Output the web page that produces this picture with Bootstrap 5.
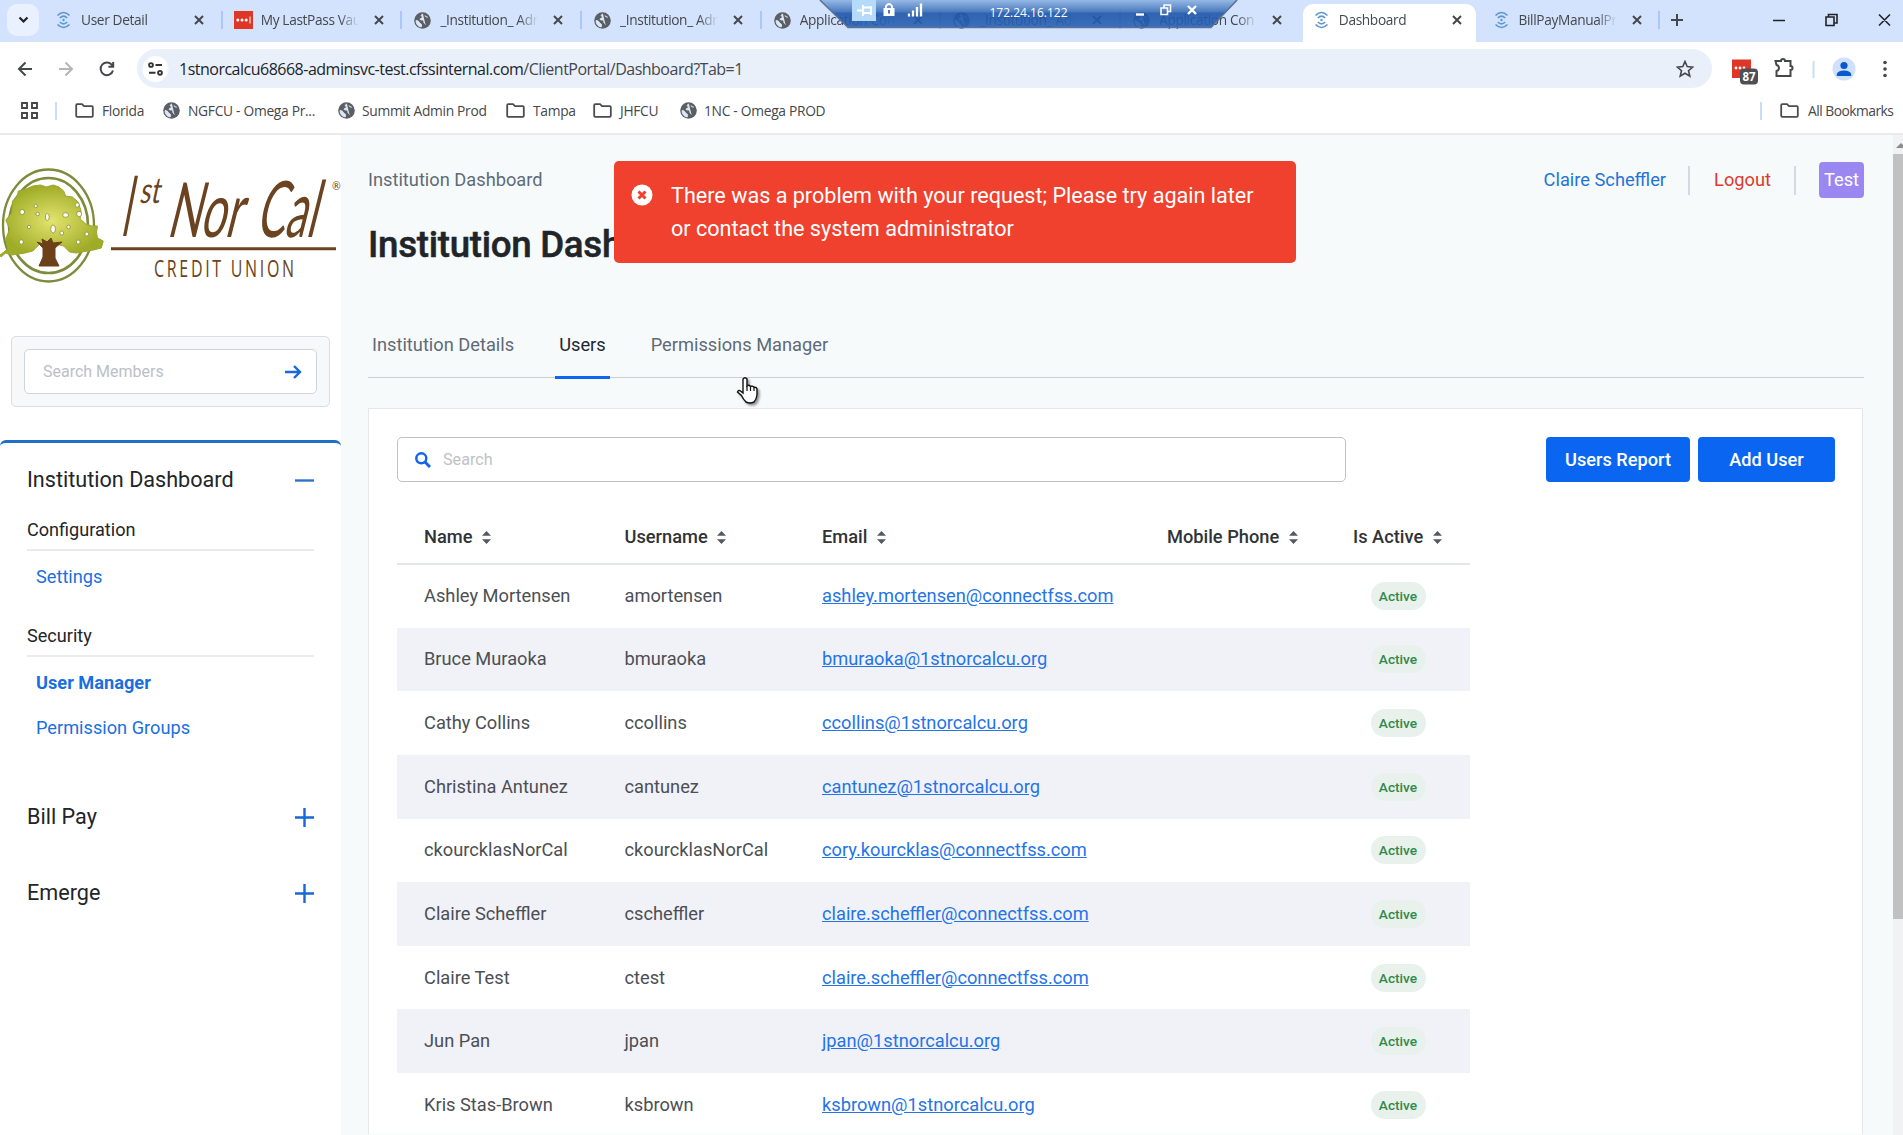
<!DOCTYPE html>
<html lang="en">
<head>
<meta charset="utf-8">
<title>Dashboard</title>
<link rel="stylesheet" href="https://cdn.jsdelivr.net/npm/bootstrap@5.3.0/dist/css/bootstrap.min.css">
<style>
html,body{height:100%;overflow:hidden}
body{font-family:Roboto,"Liberation Sans",sans-serif;font-size:18.25px;line-height:24px;color:#212529;background:#fff}
svg{display:block;flex:none}
.ff-ui{font-family:"Open Sans","Noto Sans",sans-serif;color:#45474b}
.tabstrip{height:42px;background:#d3e3fd;padding-left:42px;position:relative}
.tabpick{position:absolute;left:7px;top:4px;width:32px;height:32px;border-radius:10px;background:#e9f1fe}
.btab{width:179.7px;height:40px;flex:none;padding-left:12px;position:relative;font-size:13.7px;letter-spacing:-.35px}
.btab .lbl{width:98px;margin-left:8px;overflow:hidden;white-space:nowrap;-webkit-mask-image:linear-gradient(90deg,#000 80%,transparent 100%)}
.btab svg.x{margin-left:15px}
.btab.sep::after{content:"";position:absolute;right:-1px;top:11px;width:2px;height:18px;background:#a8c7fa}
.btab.on::before{content:"";position:absolute;z-index:0;left:3px;top:4px;width:173px;height:38px;background:#fff;border-radius:10px 10px 0 0}
.btab.on>*{z-index:1}
.rdp{position:absolute;left:819px;top:0;z-index:5}
.tbar{height:53px}
.omni{height:39px;border-radius:20px;background:#e9f0fa;width:1575px;font-size:16px;letter-spacing:-.5px;white-space:nowrap}
.bmarks{height:40px;font-size:13.8px;letter-spacing:-.3px;border-bottom:2px solid #ebebeb;white-space:nowrap}
.bmarks span{flex:none}
.vsep{width:2px;background:#c8dcfb;height:18px}
.page{height:1000px}
.side{width:341px;flex:none;background:#fff}
.sbox{margin:53px 0 0 11px;width:319px;height:71px;border:1px solid #d9dee2;border-radius:5px;background:#f6f8f9;padding:12px}
.sbox>div{height:45px;border:1px solid #cfd4da;border-radius:5px;background:#fff;padding:0 14px 0 18px;font-size:16px;color:#bcc0c5}
.menu{margin-top:33px;border-top:3px solid #1f6fc4;border-radius:6px 6px 0 0;padding:0 27px}
.m-head{font-size:21.6px;height:28px;line-height:28px}
.m-sub{font-size:18.1px;padding-bottom:7px;border-bottom:2px solid #e9ebed;height:33px}
.m-link{display:block;color:#1a6fe0;text-decoration:none;padding-left:9px;font-size:18.2px}
.main{background:#f7fafb;flex:1;padding:0 29px 0 27px;min-width:0}
.crumb{color:#5d6b78;height:36px}
.top-sep{width:2px;height:29px;background:#d5d9e1}
.envb{background:#9b87f2;color:#fff;border-radius:4px;width:45px;height:36px;line-height:35px;text-align:center}
h1.ttl{font-size:36.7px;font-weight:500;line-height:46px;letter-spacing:-.3px;margin:24px 0 0 0;white-space:nowrap;-webkit-text-stroke:.5px #212529}
.ptabs{margin-top:57px;height:53px;border-bottom:1px solid #c9cfd8;color:#5f6a76}
.ptabs div{padding:0 4px;height:54px;margin-right:37px;line-height:39px}
.ptabs .on{color:#1d2733;border-bottom:3px solid #0d66f2}
.panel{margin-top:30px;background:#fff;border:1px solid #e4e8eb;border-bottom:0;height:726px;padding:28px 27px 0 28px;width:1495px}
.find{width:949px;height:45px;border:1px solid #bfc3c8;border-radius:5px;padding-left:17px;color:#bfc2c6;font-size:16.2px}
.pbtn{height:45px;border-radius:4px;background:#0a66f0;color:#fff;font-weight:500;font-size:18.2px;border:0;padding:0}
.utab{width:1073px;table-layout:fixed;margin:26px 0 0;font-size:18.25px;--bs-table-bg:transparent}
.utab th,.utab td{padding:0 0 0 27px;vertical-align:middle;border:0;color:#4b4f54;white-space:nowrap}
.utab th{height:56px;font-weight:500;color:#303336;border-bottom:2px solid #e3e7e9;padding-top:3px}
.utab th svg{margin-left:5px;vertical-align:middle;position:relative;top:-1px}
.utab td{height:63.65px}
.utab tbody tr:nth-child(even) td{background:#f1f2f8}
.utab a{color:#2474e8}
.utab td.c{padding:0;text-align:center}
.act{display:inline-block;width:55px;height:28px;line-height:28px;border-radius:14px;background:#e9f1ec;color:#308a49;font-size:13.7px;font-weight:500;vertical-align:middle}
.sbar{width:10px;background:#f1f2f3;flex:none;padding-top:8px}
.sbar .thumb{height:765px;background:#c1c1c1;margin-top:5px}
.toastbox{position:absolute;left:614px;top:161px;width:682px;height:102px;background:#ef412e;border-radius:5px;color:#fff;font-size:21.6px;line-height:33px;padding:18px 0 0 17px;z-index:4}
.cursor{position:absolute;left:735px;top:376px;z-index:6}
</style>
<script src="https://cdn.jsdelivr.net/npm/bootstrap@5.3.0/dist/js/bootstrap.bundle.min.js"></script>
</head>
<body>
<svg width="0" height="0" style="position:absolute">
<defs>
<symbol id="cl" viewBox="0 0 10 10"><path d="M1 1l8 8M9 1l-8 8" stroke="#45474b" stroke-width="2" fill="none"/></symbol>
<symbol id="globe" viewBox="0 0 17 17"><circle cx="8.5" cy="8.5" r="8.3" fill="#5b5e62"/><path d="M9 2c-2 .3-2.300 2-1 2.600 1 .6 0 1.600-1.300 1.800C5.500 6.700 6 8 7.500 8c2 0 2.500.6 2.300 2 0 1.500 1.500 1 1.600 2.500M2 8.500c1.500.1 3 .8 3.500 2 .5 1.300 1.500.8 2 2 .3.900 0 1.700-.3 2.500C4 14.500 2 12 2 8.500zM11 3.500c.2 1.200 1.200 1.600 2.800 1.700" fill="#dce8f8" stroke="#dce8f8" stroke-width=".9"/></symbol>
<symbol id="wifi" viewBox="0 0 14 18"><g fill="none" stroke="#5c96cf" stroke-width="1.600"><path d="M1 4.500Q7-1.500 13 4.500M3.300 7Q7 3.200 10.700 7M3.300 11Q7 14.800 10.700 11M1 13.500Q7 19.500 13 13.500"/></g><circle cx="7" cy="9" r="1.200" fill="#5c96cf"/></symbol>
<symbol id="fold" viewBox="0 0 19 15"><path d="M1.200 2.200q0-1 1-1h4.800l2 2h7.800q1 0 1 1v8.600q0 1-1 1H2.200q-1 0-1-1z" fill="none" stroke="#4a4c50" stroke-width="1.800"/></symbol>
<symbol id="sort" viewBox="0 0 9 13"><path d="M4.500 0L9 4.800H0zM4.500 13L9 8.200H0z" fill="#55595e"/></symbol>
<symbol id="plus" viewBox="0 0 19 19"><path d="M0 9.500h19M9.500 0v19" stroke="#1568d6" stroke-width="2.400"/></symbol>
</defs></svg>

<div class="tabstrip ff-ui d-flex">
  <div class="tabpick d-flex align-items-center justify-content-center"><svg width="11" height="8"><path d="M1.500 1.500l4 4 4-4" fill="none" stroke="#222" stroke-width="2.200"/></svg></div>
  <div class="btab sep d-flex align-items-center"><svg width="19" height="18"><use href="#wifi"/></svg><div class="lbl">User Detail</div><svg class="x" width="10" height="10"><use href="#cl"/></svg></div>
  <div class="btab sep d-flex align-items-center"><svg width="19" height="18"><path fill="#df3727" d="M0 0h19v18H0z"/><g fill="#fff"><circle cx="3.800" cy="9" r="1.500"/><circle cx="8" cy="9" r="1.500"/><circle cx="12.200" cy="9" r="1.500"/><path d="M15.500 5.500h1v7h-1z"/></g></svg><div class="lbl">My LastPass Vault</div><svg class="x" width="10" height="10"><use href="#cl"/></svg></div>
  <div class="btab sep d-flex align-items-center"><svg width="19" height="17"><use href="#globe"/></svg><div class="lbl">_Institution_ Adm</div><svg class="x" width="10" height="10"><use href="#cl"/></svg></div>
  <div class="btab sep d-flex align-items-center"><svg width="19" height="17"><use href="#globe"/></svg><div class="lbl">_Institution_ Adm</div><svg class="x" width="10" height="10"><use href="#cl"/></svg></div>
  <div class="btab sep d-flex align-items-center"><svg width="19" height="17"><use href="#globe"/></svg><div class="lbl">Application Con</div><svg class="x" width="10" height="10"><use href="#cl"/></svg></div>
  <div class="btab sep d-flex align-items-center"><svg width="19" height="17"><use href="#globe"/></svg><div class="lbl">_Institution_ Adm</div><svg class="x" width="10" height="10"><use href="#cl"/></svg></div>
  <div class="btab d-flex align-items-center"><svg width="19" height="17"><use href="#globe"/></svg><div class="lbl">Application Con</div><svg class="x" width="10" height="10"><use href="#cl"/></svg></div>
  <div class="btab on d-flex align-items-center"><svg width="19" height="18"><use href="#wifi"/></svg><div class="lbl">Dashboard</div><svg class="x" width="10" height="10"><use href="#cl"/></svg></div>
  <div class="btab sep d-flex align-items-center"><svg width="19" height="18"><use href="#wifi"/></svg><div class="lbl">BillPayManualPr</div><svg class="x" width="10" height="10"><use href="#cl"/></svg></div>
  <svg width="12" height="40" style="margin-left:12px"><path d="M0 20h12M6 14v12" stroke="#45474b" stroke-width="2"/></svg>
  <svg width="118" height="40" style="margin-left:90px"><g fill="none" stroke="#222" stroke-width="1.600"><path d="M0 20.500h12M53 17h8v8.500h-8zM55.500 17v-2.500H64v8.500h-3M106 14.500l11 11M117 14.500l-11 11"/></g></svg>
  <svg class="rdp" width="419" height="29"><defs><linearGradient id="rg" x2="0" y2="1"><stop offset="0" stop-color="#8fb4e2"/><stop offset=".42" stop-color="#3d71b8"/><stop offset=".48" stop-color="#1e55a8"/><stop offset="1" stop-color="#2a63b5"/></linearGradient></defs>
    <path d="M0 0h419l-27 27.500H29z" fill="url(#rg)" fill-opacity=".9"/><path d="M1 0l28 27.500h363L418 0" fill="none" stroke="#5b7396" stroke-width="1.500"/>
    <rect x="33" y="0" width="24" height="21" fill="#b5dafa"/><path d="M38 10.500h6M44 5v11M44 7.500h8M44 13h8M52 6v9" stroke="#fff" stroke-width="2.200" fill="none"/>
    <path d="M64.500 8h11v8h-11z" fill="#fff"/><path d="M67 8V6q3-4 6 0v2" fill="none" stroke="#fff" stroke-width="1.800"/><path d="M70 10v3.500" stroke="#1e55a8" stroke-width="1.600"/>
    <path d="M91 16.500v-3M95 16.500V10.500M99 16.500V7M103 16.500V3.500" transform="translate(-1 0)" stroke="#fff" stroke-width="2.300"/>
    <text x="170.500" y="16.500" font-size="13.500" fill="#fff" textLength="78" lengthAdjust="spacingAndGlyphs">172.24.16.122</text>
    <path d="M317 14.500h8" stroke="#fff" stroke-width="2.400"/><path d="M342 8h6.500v6.500H342zM345 8V5h6.500v6.500h-3" fill="none" stroke="#fff" stroke-width="1.600"/><path d="M369 6l8 8M377 6l-8 8" stroke="#fff" stroke-width="2.400"/>
  </svg>
</div>

<div class="tbar ff-ui d-flex align-items-center">
  <svg width="137" height="38"><g fill="none" stroke="#45474b" stroke-width="2"><path d="M32 19H19.500M25.500 12.500L19 19l6.500 6.500"/><path d="M59 19h12.500M65.500 12.500L72 19l-6.500 6.500" stroke="#b3b5b8"/><path d="M112.300 15.500A6.300 6.300 0 1 0 113 20.500M113.200 12v4.800h-4.800"/></g></svg>
  <div class="omni d-flex align-items-center"><svg width="38" height="38"><circle cx="18.500" cy="19" r="13" fill="#fff"/><g stroke="#333" stroke-width="1.900" fill="none"><circle cx="14" cy="15" r="1.900"/><path d="M18.500 15h6.500M12 22.800h6.500"/><circle cx="23" cy="22.800" r="1.900"/></g></svg>
    <div id="url" class="ms-1"><span class="text-dark">1stnorcalcu68668-adminsvc-test.cfssinternal.com</span>/ClientPortal/Dashboard?Tab=1</div>
    <svg class="ms-auto" width="18" height="18" style="margin-right:18px"><path d="M9 1.500l2.200 5.100 5.500.5-4.200 3.600 1.300 5.400L9 13.200l-4.800 2.900 1.300-5.400L1.300 7.100l5.500-.5z" fill="none" stroke="#45474b" stroke-width="1.600"/></svg></div>
  <svg width="191" height="38"><path fill="#df3727" d="M20 9.500h19V28H20z"/><g fill="#fff"><circle cx="24" cy="18" r="1.400"/><circle cx="28" cy="18" r="1.400"/><circle cx="32" cy="18" r="1.400"/></g><rect x="28" y="18.500" width="18" height="16" rx="4" fill="#4d4f52"/><text x="37" y="31" font-size="11.500" font-weight="700" fill="#fff" text-anchor="middle" letter-spacing="0">87</text>
   <path d="M63.500 12.500h5.500q0-2 2-2t2 2h5.500v5q2 0 2 2t-2 2v6h-14v-5q2.500-.5 2.500-3t-2.500-3z" transform="translate(0 -1.500)" fill="none" stroke="#45474b" stroke-width="2"/><path d="M101.500 11v17" stroke="#c8dcfb" stroke-width="2"/><circle cx="132" cy="19" r="11.500" fill="#cfe1fc"/><circle cx="132" cy="15.500" r="3.600" fill="#0b57d0"/><path d="M124.800 26v-2q1-3.600 7.200-3.600t7.200 3.600v2z" fill="#0b57d0"/><g fill="#45474b"><circle cx="173" cy="12.500" r="1.800"/><circle cx="173" cy="19" r="1.800"/><circle cx="173" cy="25.500" r="1.800"/></g></svg>
</div>
<div class="bmarks ff-ui d-flex align-items-start">
 <div class="d-flex align-items-center w-100" style="height:31px">
  <svg width="17" height="17" style="margin-left:21px"><path d="M1 1h5v5H1zM11 1h5v5h-5zM1 11h5v5H1zM11 11h5v5h-5z" fill="none" stroke="#45474b" stroke-width="1.900"/></svg>
  <div class="vsep" style="margin-left:17px"></div>
  <svg width="19" height="15" style="margin-left:18px"><use href="#fold"/></svg><span style="width:69px;padding-left:8px">Florida</span>
  <svg width="17" height="17"><use href="#globe"/></svg><span style="width:158px;padding-left:8px">NGFCU - Omega Pr...</span>
  <svg width="17" height="17"><use href="#globe"/></svg><span style="width:151px;padding-left:7px">Summit Admin Prod</span>
  <svg width="19" height="15"><use href="#fold"/></svg><span style="width:68px;padding-left:8px">Tampa</span>
  <svg width="19" height="15"><use href="#fold"/></svg><span style="width:68px;padding-left:8px">JHFCU</span>
  <svg width="17" height="17"><use href="#globe"/></svg><span style="padding-left:7px">1NC - Omega PROD</span>
  <div class="vsep ms-auto"></div><svg width="19" height="15" style="margin-left:18px"><use href="#fold"/></svg><span style="width:104px;padding-left:9px;letter-spacing:-.5px">All Bookmarks</span>
 </div>
</div>

<div class="page d-flex">
 <aside class="side">
  <svg width="341" height="148" viewBox="0 135 341 148"><defs><radialGradient id="tg"><stop offset="0" stop-color="#e3e46e"/><stop offset="1" stop-color="#9fac27"/></radialGradient></defs>
   <g fill="none" stroke="#7f8a3b"><ellipse cx="48.500" cy="225.500" rx="45.500" ry="56" stroke-width="2.300"/><ellipse cx="48.500" cy="225.500" rx="39.500" ry="47.500" stroke-width="2.600"/></g>
   <g transform="scale(.965 1)"><path d="M0 255l8-6-2-10 4-10-4-9 6-7 1-12 5-5 1-5 8-2 7-3 8-1 6 2 7-2 6 2 5 4 2 5 7 1 6 5 3 9-1 8 6 5 6 2 6 0-1 6 1 6 6 3-2 7-8 2-6 1-12 2-7-1-6-6-8-2-8-1-9 1-7 7-8 2-6 1-8 1-6-2-5 4z" fill="url(#tg)" stroke="#9aa52f" stroke-width="1"/>
   <g fill="#fff" stroke="#8b8d2c" stroke-width=".8"><circle cx="23" cy="212" r="2.500"/><circle cx="37" cy="206" r="1.700"/><circle cx="39" cy="214" r="1.800"/><ellipse cx="49" cy="217" rx="2" ry="3.500"/><ellipse cx="68" cy="215" rx="3" ry="2.300"/><ellipse cx="55" cy="229" rx="2.500" ry="4"/><circle cx="30" cy="227" r="1.700"/><circle cx="71" cy="227" r="1.800"/><circle cx="82" cy="214" r="2.600"/><circle cx="80" cy="205" r="2.200"/><circle cx="22" cy="242" r="2.200"/><circle cx="81" cy="242" r="2"/><circle cx="64" cy="233" r="2"/><circle cx="90" cy="234" r="2"/></g></g>
   <path d="M37 242l6 2-1-5 5 3 4-4 2 5 9-1-7 6 0 10 4 8H39l4-9 0-9z" fill="#6c4019" stroke="#6c4019"/>
   <g fill="#6b4320" font-family="Lato,sans-serif">
    <text transform="translate(120 236) skewX(-11) scale(.4 1)" font-size="84">I</text>
    <text transform="translate(139 203) skewX(-12)" font-size="36" textLength="20" lengthAdjust="spacingAndGlyphs">st</text>
    <text transform="translate(166 237) skewX(-14)" font-size="76" textLength="74" lengthAdjust="spacingAndGlyphs">Nor</text>
    <text transform="translate(255 237) skewX(-14)" font-size="78" textLength="60" lengthAdjust="spacingAndGlyphs">Cal</text>
    <text x="332" y="190" font-size="10.500">®</text>
    <path d="M111 247.300h225v3H111z"/>
    <text transform="translate(154 277) scale(.68 1)" font-family="Open Sans" font-size="23.500" textLength="206" lengthAdjust="spacing">CREDIT UNION</text></g>
  </svg>
  <div class="sbox"><div class="d-flex align-items-center justify-content-between"><span>Search Members</span><svg width="17" height="14"><path d="M0 7h15M9 1l6 6-6 6" fill="none" stroke="#1568e0" stroke-width="2.400"/></svg></div></div>
  <div class="menu">
   <div class="m-head d-flex align-items-center justify-content-between" style="margin-top:23px"><span>Institution Dashboard</span><svg width="19" height="3"><path d="M0 1.500h19" stroke="#2b74cc" stroke-width="2.400"/></svg></div>
   <div class="m-sub" style="margin-top:24px">Configuration</div>
   <a class="m-link" style="margin-top:14px">Settings</a>
   <div class="m-sub" style="margin-top:35px">Security</div>
   <a class="m-link fw-bold" style="margin-top:14px">User Manager</a>
   <a class="m-link" style="margin-top:21px">Permission Groups</a>
   <div class="m-head d-flex align-items-center justify-content-between" style="margin-top:63px"><span>Bill Pay</span><svg width="19" height="19"><use href="#plus"/></svg></div>
   <div class="m-head d-flex align-items-center justify-content-between" style="margin-top:48px"><span>Emerge</span><svg width="19" height="19"><use href="#plus"/></svg></div>
  </div>
 </aside>
 <main class="main">
  <div class="d-flex crumb" style="margin-top:27px;line-height:36px"><span>Institution Dashboard</span>
   <div class="ms-auto d-flex align-items-center"><span style="color:#2474d8">Claire Scheffler</span><div class="top-sep" style="margin:0 24px 0 22px"></div><span style="color:#dc3a2c">Logout</span><div class="top-sep" style="margin:0 23px"></div><span class="envb">Test</span></div></div>
  <h1 class="ttl">Institution Dashboard</h1>
  <div class="ptabs d-flex"><div>Institution Details</div><div class="on">Users</div><div>Permissions Manager</div></div>
  <div class="panel">
   <div class="d-flex"><div class="find d-flex align-items-center"><svg width="16" height="16"><circle cx="6.300" cy="6.300" r="5" fill="none" stroke="#1265ea" stroke-width="2.500"/><path d="M10 10l5 5" stroke="#1265ea" stroke-width="3"/></svg><span style="margin-left:12px">Search</span></div>
    <button class="btn pbtn ms-auto" style="width:144px">Users Report</button><button class="btn pbtn" style="width:137px;margin-left:8px">Add User</button></div>
   <table class="table utab"><colgroup><col style="width:200.5px"><col style="width:197.5px"><col style="width:345px"><col style="width:186px"><col style="width:144px"></colgroup>
    <thead><tr><th>Name <svg class="d-inline" width="9" height="13"><use href="#sort"/></svg></th><th>Username <svg class="d-inline" width="9" height="13"><use href="#sort"/></svg></th><th>Email <svg class="d-inline" width="9" height="13"><use href="#sort"/></svg></th><th>Mobile Phone <svg class="d-inline" width="9" height="13"><use href="#sort"/></svg></th><th>Is Active <svg class="d-inline" width="9" height="13"><use href="#sort"/></svg></th></tr></thead>
    <tbody>
    <tr><td>Ashley Mortensen</td><td>amortensen</td><td><a href="#">ashley.mortensen@connectfss.com</a></td><td></td><td class="c"><span class="act">Active</span></td></tr>
    <tr><td>Bruce Muraoka</td><td>bmuraoka</td><td><a href="#">bmuraoka@1stnorcalcu.org</a></td><td></td><td class="c"><span class="act">Active</span></td></tr>
    <tr><td>Cathy Collins</td><td>ccollins</td><td><a href="#">ccollins@1stnorcalcu.org</a></td><td></td><td class="c"><span class="act">Active</span></td></tr>
    <tr><td>Christina Antunez</td><td>cantunez</td><td><a href="#">cantunez@1stnorcalcu.org</a></td><td></td><td class="c"><span class="act">Active</span></td></tr>
    <tr><td>ckourcklasNorCal</td><td>ckourcklasNorCal</td><td><a href="#">cory.kourcklas@connectfss.com</a></td><td></td><td class="c"><span class="act">Active</span></td></tr>
    <tr><td>Claire Scheffler</td><td>cscheffler</td><td><a href="#">claire.scheffler@connectfss.com</a></td><td></td><td class="c"><span class="act">Active</span></td></tr>
    <tr><td>Claire Test</td><td>ctest</td><td><a href="#">claire.scheffler@connectfss.com</a></td><td></td><td class="c"><span class="act">Active</span></td></tr>
    <tr><td>Jun Pan</td><td>jpan</td><td><a href="#">jpan@1stnorcalcu.org</a></td><td></td><td class="c"><span class="act">Active</span></td></tr>
    <tr><td>Kris Stas-Brown</td><td>ksbrown</td><td><a href="#">ksbrown@1stnorcalcu.org</a></td><td></td><td class="c"><span class="act">Active</span></td></tr>
    </tbody></table>
  </div>
 </main>
 <div class="sbar"><svg width="10" height="6"><path d="M8 0l5 5H3z" fill="#8b8b8b"/></svg><div class="thumb"></div></div>
</div>
<div class="toastbox d-flex"><svg width="22" height="33"><circle cx="11" cy="16" r="10.500" fill="#fff"/><path d="M7.500 12.500l7 7M14.500 12.500l-7 7" stroke="#ef412e" stroke-width="3"/></svg><div style="margin-left:18px">There was a problem with your request; Please try again later<br>or contact the system administrator</div></div>
<svg class="cursor" width="28" height="34" style="filter:drop-shadow(2px 2px 1px rgba(0,0,0,.4))"><path d="M8 14V3q2-2.500 4 0v7q2-1.500 3.500.5 2-1 3.500.8 2.500-.3 3 1.700v6q-.5 4-3 7-4 2-8 0-3-3-4.500-6.500L2.500 16q1-2.500 3-1L8 17z" fill="#fff" stroke="#111" stroke-width="1.400"/><path d="M12 10v5M15.500 10.500V15M19 11.500V15" stroke="#111" stroke-width="1.200"/></svg>
</body>
</html>
